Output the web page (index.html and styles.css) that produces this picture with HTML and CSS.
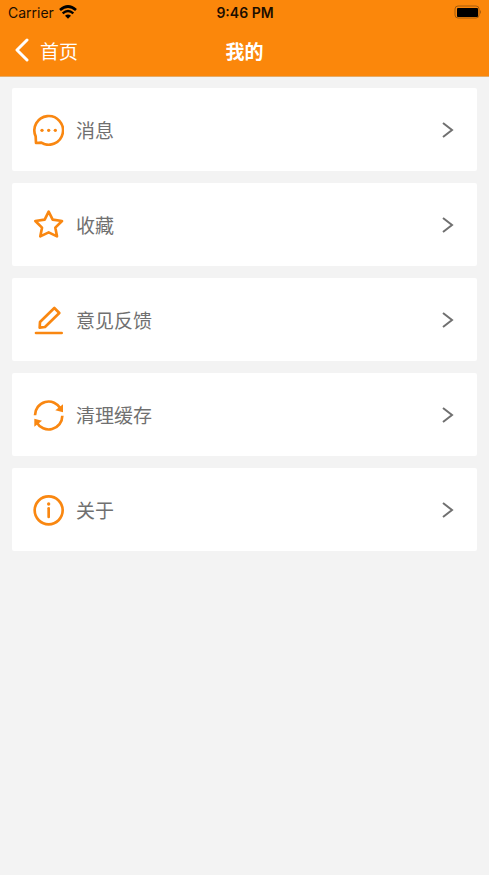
FILE: index.html
```html
<!DOCTYPE html>
<html lang="zh-CN">
<head>
<meta charset="utf-8">
<meta name="viewport" content="width=device-width, initial-scale=1">
<title>我的</title>
<link rel="stylesheet" href="styles.css">
</head>
<body>
<header class="header">
  <div class="status">
    <div class="carrier">
      <span>Carrier</span>
      <svg class="wifi" viewBox="0 0 54 42" aria-hidden="true">
        <path d="M3 15Q27-6 51 15" fill="none" stroke="currentColor" stroke-width="8"/>
        <path d="M11 25Q27 11 43 25" fill="none" stroke="currentColor" stroke-width="7"/>
        <path d="M18 32Q27 25 36 32L27 41Z" fill="currentColor"/>
      </svg>
    </div>
    <time class="time">9:46 PM</time>
    <svg class="battery" viewBox="0 0 28 14" aria-hidden="true">
      <rect class="battery-case" x="1" y="1" width="24" height="12" rx="3"/>
      <rect x="3" y="3" width="21" height="9" rx="1"/>
      <path class="battery-cap" d="M26 5q2 2 0 4z"/>
    </svg>
  </div>
  <nav class="navbar">
    <a class="back" href="#">
      <svg class="back-icon" viewBox="0 0 16 24" aria-hidden="true"><path d="M13 2L3 12L13 22"/></svg>
      <span>首页</span>
    </a>
    <h1 class="title">我的</h1>
  </nav>
</header>
<main class="menu">
  <a class="item" href="#">
    <svg class="icon" viewBox="0 0 96 96" aria-hidden="true">
      <path d="M11 67A43 43 0 1 1 28 86L12 87Z"/>
      <g class="solid"><circle cx="30" cy="49" r="5"/><circle cx="50" cy="49" r="5"/><circle cx="70" cy="49" r="5"/></g>
    </svg>
    <span class="label">消息</span>
    <svg class="chevron" viewBox="0 0 12 18" aria-hidden="true"><path d="M1 2L10 9L1 16"/></svg>
  </a>
  <a class="item" href="#">
    <svg class="icon" viewBox="0 0 96 96" aria-hidden="true">
      <path d="M50 8L62 32L90 36L70 56L75 82L50 70L25 82L30 56L10 36L38 32Z"/>
    </svg>
    <span class="label">收藏</span>
    <svg class="chevron" viewBox="0 0 12 18" aria-hidden="true"><path d="M1 2L10 9L1 16"/></svg>
  </a>
  <a class="item" href="#">
    <svg class="icon" viewBox="0 0 96 96" aria-hidden="true">
      <path d="M24 54L67 12L82 27L39 69L23 71Z"/>
      <path d="M12 87H89"/>
    </svg>
    <span class="label">意见反馈</span>
    <svg class="chevron" viewBox="0 0 12 18" aria-hidden="true"><path d="M1 2L10 9L1 16"/></svg>
  </a>
  <a class="item" href="#">
    <svg class="icon" viewBox="0 0 96 96" aria-hidden="true">
      <path class="arc" d="M9 49A41 41 0 0 1 86 29"/>
      <path class="arc" d="M91 50A41 41 0 0 1 14 70"/>
      <path class="solid" d="M93 16V40L70 34Z"/>
      <path class="solid" d="M7 83V59L30 65Z"/>
    </svg>
    <span class="label">清理缓存</span>
    <svg class="chevron" viewBox="0 0 12 18" aria-hidden="true"><path d="M1 2L10 9L1 16"/></svg>
  </a>
  <a class="item" href="#">
    <svg class="icon" viewBox="0 0 96 96" aria-hidden="true">
      <circle cx="50" cy="49" r="42"/>
      <path d="M50 43V69"/>
      <circle class="solid" cx="50" cy="30" r="5"/>
    </svg>
    <span class="label">关于</span>
    <svg class="chevron" viewBox="0 0 12 18" aria-hidden="true"><path d="M1 2L10 9L1 16"/></svg>
  </a>
</main>
</body>
</html>
```
FILE: styles.css
```css
* {
  box-sizing: border-box;
}

body {
  margin: 0;
  min-height: 100vh;
  background: #f3f3f3;
  font-family: Inter, "Noto Sans CJK SC", sans-serif;
}

a {
  color: inherit;
  text-decoration: none;
}

svg {
  display: block;
  flex: none;
}

.header {
  background: #fb870b;
  border-bottom: 1px solid #e5ac69;
}

.status {
  display: grid;
  grid-template-columns: 1fr auto 1fr;
  align-items: center;
  height: 24px;
  padding: 0 7px 0 8px;
  color: #1c0e00;
  font-size: 14px;
}

.carrier {
  display: flex;
  align-items: center;
  gap: 5px;
}

.wifi {
  width: 18px;
  height: 14px;
  color: #000;
}

.time {
  font-weight: 600;
}

.battery {
  width: 28px;
  height: 14px;
  justify-self: end;
}

.battery-case {
  fill: none;
  stroke: #a65c0c;
}

.battery-cap {
  fill: #a65c0c;
}

.navbar {
  display: grid;
  grid-template-columns: 1fr auto 1fr;
  align-items: center;
  height: 52px;
  padding: 0 14px;
  color: #fff;
}

.back {
  display: flex;
  align-items: center;
  gap: 10px;
  font-size: 19px;
}

.back-icon {
  width: 16px;
  height: 24px;
  fill: none;
  stroke: #fff;
  stroke-width: 3;
  stroke-linecap: round;
  stroke-linejoin: round;
}

.title {
  margin: 0;
  font-size: 19px;
  font-weight: 600;
}

.menu {
  display: grid;
  gap: 12px;
  padding: 11px 12px;
}

.item {
  display: flex;
  align-items: center;
  gap: 12px;
  height: 83px;
  padding: 0 23px 0 20px;
  border-radius: 2px;
  background: #fff;
}

.icon {
  width: 32px;
  height: 32px;
  fill: none;
  stroke: #f98711;
  stroke-width: 8;
  stroke-linecap: round;
  stroke-linejoin: round;
}

.icon .arc {
  stroke-linecap: butt;
}

.icon .solid {
  fill: #f98711;
  stroke: none;
}

.label {
  flex: 1;
  color: #707070;
  font-size: 19px;
}

.chevron {
  width: 12px;
  height: 18px;
  fill: none;
  stroke: #707070;
  stroke-width: 2;
}
```
